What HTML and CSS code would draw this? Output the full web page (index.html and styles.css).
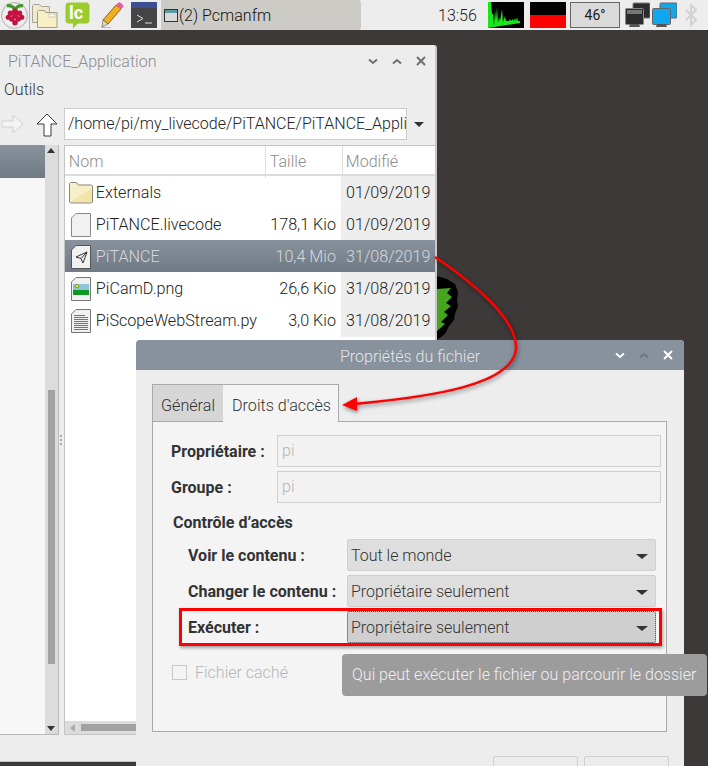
FILE: index.html
```html
<!DOCTYPE html>
<html lang="fr">
<head>
<meta charset="utf-8">
<title>PiTANCE</title>
<link rel="stylesheet" href="styles.css">
</head>
<body>
<header class="panel">
  <div class="launcher">
    <span class="menu-btn">
      <svg width="20" height="22" viewBox="0 0 22 24"><path d="M2 2c4-1 7 1 9 4M20 2c-4-1-7 1-9 4" stroke="#3f9a2e" stroke-width="3.500" fill="none"/><g fill="#c4123e"><circle cx="11" cy="8" r="3.200"/><circle cx="6" cy="10" r="3"/><circle cx="16" cy="10" r="3"/><circle cx="3.500" cy="14.500" r="2.800"/><circle cx="18.500" cy="14.500" r="2.800"/><circle cx="11" cy="13" r="3.200"/><circle cx="7.500" cy="16.500" r="3"/><circle cx="14.500" cy="16.500" r="3"/><circle cx="11" cy="20.500" r="3"/></g></svg>
    </span>
    <span class="sep"></span>
    <svg class="i-folder" width="26" height="26" viewBox="0 0 26 26"><path d="M.5 3.500l1-1h6l2 2h8v16H.5z" fill="#efe9cf" stroke="#a9a490"/><path d="M5.500 9.500l1-1h6l1 2h11.500v15H5.500z" fill="#f7efc6" stroke="#a39d84"/><rect x="17" y="12" width="6" height="3" fill="#fff" stroke="#b5ae92" stroke-width=".6"/></svg>
    <svg class="i-lc" width="25" height="27" viewBox="0 0 25 27"><path d="M4 .5h17a3.500 3.500 0 0 1 3.500 3.500v14a3.500 3.500 0 0 1-3.500 3.500h-8l-5 5v-5H4A3.500 3.500 0 0 1 .5 18V4A3.500 3.500 0 0 1 4 .5z" fill="#9ccb2f"/><text class="lc-text" x="4" y="17">lc</text></svg>
    <svg class="i-pencil" width="24" height="26" viewBox="0 0 24 26"><path d="M3 18L16 3l5 4L8 22z" fill="#f2b01e" stroke="#6b4a12" stroke-width=".8"/><path d="M16 3l2-2a2 2 0 0 1 3 0l2 2a2 2 0 0 1 0 2.500L21 7z" fill="#e75f9c"/><path d="M3 18l5 4-6 3z" fill="#f0d9ae" stroke="#555" stroke-width=".6"/><path d="M1 25.500h10" stroke="#bbb"/></svg>
    <svg class="i-term" width="26" height="26" viewBox="0 0 26 26"><rect width="26" height="26" fill="#454545"/><rect width="26" height="6" fill="#3d4f92"/><path d="M6 13l6 3.500-6 3.500M14 21h7" stroke="#ddd" stroke-width="1" fill="none"/></svg>
  </div>
  <div class="task">
    <svg width="14" height="13" viewBox="0 0 14 13"><rect x=".5" y=".5" width="13" height="12" fill="#d9d9d9" stroke="#333"/><rect x="1" y="1" width="12" height="3" fill="#5b9aa0"/></svg>
    <span>(2) Pcmanfm</span>
  </div>
  <div class="tray">
    <span class="clock">13:56</span>
    <svg class="cpu" width="36" height="26" viewBox="0 0 36 26"><rect width="36" height="26" fill="#000"/><path d="M0 26V0h3l1 12h1l1 12 1-16 1 10 1-13 1 16 1-6 1 4 2-12 1 13 2-6 1 5h3l1-2 1 2 2-2 1 2 1-3 1 3 1-4 1 4h2v2z" fill="#19e619"/></svg>
    <span class="mem"></span>
    <span class="temp">46°</span>
    <svg class="net" width="25" height="26" viewBox="0 0 25 26"><rect x="8" y="1" width="17" height="15" rx="1" fill="#2c2c2c" stroke="#777"/><rect x=".5" y="6.500" width="18" height="16" rx="1" fill="#2c2c2c" stroke="#888"/><rect x="2" y="8" width="15" height="4" fill="#777"/><path d="M5 22h9l1 3H4z" fill="#555"/></svg>
    <svg class="net" width="25" height="26" viewBox="0 0 25 26"><rect x="8" y="1" width="17" height="15" rx="1" fill="#14a6e8" stroke="#666"/><rect x=".5" y="6.500" width="18" height="16" rx="1" fill="#0fa8f0" stroke="#666"/><path d="M5 22h9l1 3H4z" fill="#555"/></svg>
    <svg class="bt" width="12" height="24" viewBox="0 0 12 24"><path d="M1 7l10 10-5 5V2l5 5L1 17" fill="none" stroke="#d2d2d2" stroke-width="2"/></svg>
  </div>
</header>

<main class="desktop">
  <svg class="leaf" width="22" height="65" viewBox="0 0 22 65"><path d="M0 0L10 3L18 8L21 16L20 24L21 30L18 38L17 44L12 50L8 58L0 64z" fill="#000"/><path d="M0 13L14 12L10 17L15 21L9 27L14 30L7 36L11 39L4 46L8 48L0 55z" fill="#45a51e"/></svg>

  <section class="window fm">
    <div class="fm-title">
      <span class="fm-name">PiTANCE_Application</span>
      <span class="controls">
        <svg width="10" height="7" viewBox="0 0 10 7"><path d="M1 1.500l4 3.500 4-3.500" fill="none" stroke="#6f6f6f" stroke-width="2"/></svg>
        <svg width="10" height="7" viewBox="0 0 10 7"><path d="M1 5.500l4-3.500 4 3.500" fill="none" stroke="#6f6f6f" stroke-width="2"/></svg>
        <svg width="10" height="10" viewBox="0 0 10 10"><path d="M1 1l8 8M9 1l-8 8" fill="none" stroke="#6f6f6f" stroke-width="2"/></svg>
      </span>
    </div>
    <div class="fm-menu">Outils</div>
    <div class="fm-tools">
      <svg width="24" height="22" viewBox="0 0 24 22"><path d="M1 8h11V2l10 9-10 9v-6H1z" fill="#f4f4f4" stroke="#d0d0d0"/></svg>
      <svg class="up" width="22" height="24" viewBox="0 0 22 24"><path d="M11 1l10 10h-6v12H8V11H1z" fill="#fff" stroke="#3a3a3a"/></svg>
      <div class="path"><span>/home/pi/my_livecode/PiTANCE/PiTANCE_Appli</span></div>
      <span class="tri path-tri"></span>
    </div>
    <div class="fm-body">
      <aside class="side">
        <div class="side-list"><div class="side-sel"></div></div>
        <div class="vscroll">
          <span class="tri-up"></span>
          <span class="vthumb"></span>
          <span class="tri"></span>
        </div>
      </aside>
      <div class="grip"><i></i><i></i><i></i></div>
      <div class="list">
        <div class="list-head">
          <span class="h-name">Nom</span><span class="h-size">Taille</span><span class="h-date">Modifié</span>
        </div>
        <div class="row">
          <svg width="24" height="22" viewBox="0 0 24 22"><path d="M.5 3V1.500l1-1h6l2 2.500h13l1 1v16l-1 1H1.500l-1-1z" fill="#f6efc8" stroke="#8b8670"/><path d="M1 20L23 6v14z" fill="#f1e5ac"/></svg>
          <span class="name">Externals</span><span class="size"></span><span class="date">01/09/2019</span>
        </div>
        <div class="row">
          <svg class="doc" width="20" height="24" viewBox="0 0 20 24"><path d="M5 .5h14.500v23H.5V5z" fill="#f1f1f1" stroke="#8a8a8a"/></svg>
          <span class="name">PiTANCE.livecode</span><span class="size">178,1 Kio</span><span class="date">01/09/2019</span>
        </div>
        <div class="row sel">
          <svg class="doc" width="20" height="24" viewBox="0 0 20 24"><path d="M5 .5h14.500v23H.5V5z" fill="#f1f1f1" stroke="#555"/><path d="M5 12l11-5-4 11-2-4.500zM16 7L10 13.500" fill="none" stroke="#333"/></svg>
          <span class="name">PiTANCE</span><span class="size">10,4 Mio</span><span class="date">31/08/2019</span>
        </div>
        <div class="row">
          <svg class="doc" width="20" height="24" viewBox="0 0 20 24"><path d="M5 .5h14.500v23H.5V5z" fill="#f1f1f1" stroke="#777"/><rect x="2" y="7" width="16" height="6" fill="#8ec4d8"/><rect x="2" y="13" width="16" height="5" fill="#0a9a1e"/><circle cx="6" cy="9" r="1.800" fill="#ee0" stroke="#555" stroke-width=".5"/></svg>
          <span class="name">PiCamD.png</span><span class="size">26,6 Kio</span><span class="date">31/08/2019</span>
        </div>
        <div class="row">
          <svg class="doc" width="20" height="24" viewBox="0 0 20 24"><path d="M5 .5h14.500v23H.5V5z" fill="#f1f1f1" stroke="#777"/><path d="M3 6.500h11M3 8.500h14M3 10.500h14M3 12.500h14M3 14.500h14M3 16.500h14M3 18.500h14M3 20.500h14" stroke="#555" stroke-width=".8"/></svg>
          <span class="name">PiScopeWebStream.py</span><span class="size">3,0 Kio</span><span class="date">31/08/2019</span>
        </div>
        <div class="list-fill"></div>
        <div class="hscroll"><span class="tri-left"></span><span class="hthumb"></span></div>
      </div>
    </div>
  </section>

  <section class="window dialog">
    <div class="d-title">
      <span class="d-name">Propriétés du fichier</span>
      <span class="controls light">
        <svg width="10" height="7" viewBox="0 0 10 7"><path d="M1 1.500l4 3.500 4-3.500" fill="none" stroke="#fff" stroke-width="2"/></svg>
        <svg width="10" height="7" viewBox="0 0 10 7"><path d="M1 5.500l4-3.500 4 3.500" fill="none" stroke="#6e7882" stroke-width="2"/></svg>
        <svg width="10" height="10" viewBox="0 0 10 10"><path d="M1 1l8 8M9 1l-8 8" fill="none" stroke="#fff" stroke-width="2"/></svg>
      </span>
    </div>
    <div class="d-body">
      <div class="tabs">
        <span class="tab">Général</span>
        <span class="tab active">Droits d'accès</span>
      </div>
      <div class="panel-box">
        <div class="f-row"><label class="f-label">Propriétaire :</label><div class="f-input">pi</div></div>
        <div class="f-row"><label class="f-label">Groupe :</label><div class="f-input">pi</div></div>
        <h3 class="sect">Contrôle d’accès</h3>
        <div class="s-row"><label class="s-label">Voir le contenu :</label><div class="select">Tout le monde<span class="tri"></span></div></div>
        <div class="s-row"><label class="s-label">Changer le contenu :</label><div class="select">Propriétaire seulement<span class="tri"></span></div></div>
        <div class="s-row"><label class="s-label">Exécuter :</label><div class="select focus">Propriétaire seulement<span class="tri"></span></div></div>
        <div class="check-row"><span class="check"></span><span>Fichier caché</span></div>
      </div>
      <div class="d-foot"><span class="btn"></span><span class="btn"></span></div>
    </div>
  </section>

  <div class="redbox"></div>
  <div class="tooltip">Qui peut exécuter le fichier ou parcourir le dossier</div>
  <svg class="arrow" width="708" height="736" viewBox="0 30 708 736">
    <path d="M435 257C472 282 516 318 516 347C516 385 430 397 354 404" fill="none" stroke="#f00" stroke-width="2.500"/>
    <path d="M342 405L357 397L357 411z" fill="#f00"/>
  </svg>
</main>
</body>
</html>
```
FILE: styles.css
```css
* { box-sizing: border-box; }
html, body { margin: 0; height: 100%; overflow: hidden; }
body { width: 708px; height: 766px; display: flex; flex-direction: column; font-family: Roboto, "Liberation Sans", sans-serif; font-size: 16px; font-weight: 300; color: #222; background: #3d3938; }
svg { display: block; flex: none; }

.panel { height: 30px; flex: none; display: flex; align-items: center; background: #ededed; }
.launcher { display: flex; align-items: center; width: 161px; height: 30px; }
.menu-btn { width: 27px; height: 27px; margin-left: 1px; border-radius: 50%; background: radial-gradient(#f2f2f2 55%, #c4c4c4); border: 1px solid #b5b5b5; display: flex; align-items: center; justify-content: center; }
.sep { width: 1px; height: 30px; margin-left: 1px; background: #b0b0b0; }
.i-folder { margin-left: 2px; }
.i-lc { margin-left: 7px; }
.lc-text { font-family: Roboto, sans-serif; font-weight: 700; font-size: 18px; fill: #fff; }
.i-pencil { margin-left: 10px; }
.i-term { margin-left: 7px; }
.task { width: 200px; height: 30px; display: flex; align-items: center; gap: 1px; padding-left: 3px; background: #cdcbc6; border-radius: 0 3px 3px 0; color: #111; }
.tray { display: flex; align-items: center; height: 30px; }
.clock { margin-left: 77px; width: 50px; color: #222; }
.mem { width: 36px; height: 26px; margin-left: 6px; background: linear-gradient(#000 0 50%, #f00 50% 100%); }
.temp { width: 50px; height: 26px; margin-left: 4px; border: 1px solid #666; background: #dadada; font-size: 14px; font-weight: 400; line-height: 24px; text-align: center; color: #222; }
.net { margin-left: 2px; }
.temp + .net { margin-left: 5px; }
.bt { margin-left: 8px; }

.desktop { position: relative; flex: 1; background: #3d3938; }
.leaf { position: absolute; left: 437px; top: 246px; }
.window { position: absolute; }
.controls { display: flex; align-items: center; gap: 14px; }

.fm { left: 0; top: 15px; width: 437px; height: 717px; display: flex; flex-direction: column; background: #ededed; border-right: 2px solid #c8c8c8; border-radius: 0 3px 0 0; border-bottom: 1px solid #c4c4c4; }
.fm-title { height: 30px; flex: none; display: flex; align-items: center; justify-content: space-between; padding: 2px 9px 0 8px; }
.fm-name { color: #8c8c8c; }
.fm-menu { height: 28px; flex: none; line-height: 30px; padding-left: 4px; color: #333; }
.fm-tools { height: 42px; flex: none; display: flex; align-items: flex-start; padding: 5px 0 0 1px; }
.fm-tools > svg { margin-top: 5px; }
.up { margin-left: 11px; }
.path { width: 343px; height: 32px; margin-left: 6px; padding-left: 3px; background: #fff; border: 1px solid #ccc; line-height: 30px; overflow: hidden; white-space: nowrap; color: #222; }
.tri { width: 0; height: 0; border: 5px solid transparent; border-top: 5px solid #333; border-bottom: 0; }
.path-tri { margin: 14px 0 0 7px; border-width: 5px 5px 0; }

.fm-body { height: 590px; flex: none; display: flex; }
.side { width: 59px; display: flex; border: solid #b8b8b8; border-width: 0 1px 1px 0; background: #f7f7f7; }
.side-list { flex: 1; }
.side-sel { height: 33px; background: linear-gradient(#87929d, #6f7a85); }
.vscroll { width: 13px; display: flex; flex-direction: column; align-items: center; justify-content: space-between; padding: 3px 0; background: #dcdcdc; position: relative; }
.tri-up { width: 0; height: 0; border: solid transparent; border-width: 0 4px 5px; border-bottom-color: #333; }
.vscroll .tri { border-width: 5px 4px 0; }
.vthumb { position: absolute; left: 3px; top: 245px; width: 7px; height: 274px; background: #a2a2a2; }
.grip { width: 5px; display: flex; flex-direction: column; align-items: center; justify-content: center; gap: 2px; }
.grip i { width: 2px; height: 2px; background: #aaa; }
.list { width: 372px; display: flex; flex-direction: column; background: #fff; border: solid #c4c4c4; border-width: 1px 0 1px 1px; }
.list-head { height: 30px; flex: none; display: grid; grid-template-columns: 200px 77px 1fr; border-bottom: 2px solid #dcdcdc; color: #8c8c8c; line-height: 32px; }
.h-name { padding-left: 4px; }
.h-size { padding-left: 4px; border-left: 1px solid #dcdcdc; }
.h-date { padding-left: 3px; border-left: 1px solid #dcdcdc; }
.row { height: 32px; flex: none; display: grid; grid-template-columns: 5px 20px 6px 1fr 77px 94px; align-items: center; font-size: 16.150px; }
.row svg { grid-column: 2; }
.row .doc { margin-left: 1px; }
.row > svg:not(.doc) { margin-left: -1px; }
.name { grid-column: 4; white-space: nowrap; }
.size { grid-column: 5; text-align: right; padding-right: 5px; white-space: nowrap; }
.date { grid-column: 6; align-self: stretch; line-height: 33px; background: #ededed; padding-left: 5px; }
.row.sel { background: linear-gradient(#87929d, #6f7a85); color: #d4d8dc; }
.row.sel .date { background: none; }
.list-fill { flex: 1; }
.hscroll { height: 13px; flex: none; display: flex; align-items: center; background: #dcdcdc; padding-left: 5px; gap: 6px; }
.tri-left { width: 0; height: 0; border: solid transparent; border-width: 4px 5px 4px 0; border-right-color: #aaa; }
.hthumb { flex: 1; height: 7px; background: #a2a2a2; }

.dialog { left: 136px; top: 310px; width: 548px; height: 426px; display: flex; flex-direction: column; background: #ededed; border-radius: 4px 4px 0 0; overflow: hidden; }
.d-title { height: 30px; flex: none; position: relative; display: flex; align-items: center; justify-content: flex-end; padding-right: 11px; background: #87929d; }
.d-name { position: absolute; left: 0; right: 0; top: 7px; text-align: center; color: #e2e5e8; }
.d-body { flex: 1; padding: 14px 17px 0 16px; }
.tabs { height: 38px; display: flex; }
.tab { height: 38px; padding: 0 8px; line-height: 41px; background: #d6d6d6; border: 1px solid #a9a9a9; color: #333; white-space: nowrap; font-size: 16.150px; }
.tab.active { width: 116px; margin-left: -1px; padding-left: 9px; background: #f4f4f4; border-left: 0; border-bottom: 0; position: relative; z-index: 1; }
.panel-box { height: 311px; margin-top: -1px; padding-top: 13px; background: #f4f4f4; border: 1px solid #a9a9a9; }
.f-row { display: flex; align-items: center; height: 32px; margin-bottom: 4px; padding-left: 18px; }
.f-label { width: 106px; font-weight: 700; color: #333; }
.f-input { width: 384px; height: 32px; padding-left: 4px; line-height: 30px; border: 1px solid #d0d0d0; background: #f2f2f2; color: #b4b4b4; }
.sect { margin: 9px 0 0 20px; height: 27px; font-size: 16px; font-weight: 700; line-height: 22px; color: #333; }
.s-row { display: flex; align-items: center; height: 32px; margin-bottom: 4px; padding-left: 35px; }
.s-label { width: 159px; font-weight: 700; color: #333; white-space: nowrap; }
.select { width: 309px; height: 32px; display: flex; align-items: center; justify-content: space-between; padding: 0 7px 0 3px; border: 1px solid #cfcfcf; border-radius: 2px; background: #dedede; color: #333; }
.select .tri { border-width: 5px 6px 0; border-top-color: #333; margin-top: 3px; }
.select.focus { background: #cfcfcf; border: 1px dotted #444; }
.check-row { display: flex; align-items: center; gap: 8px; height: 16px; margin: 21px 0 0 19px; color: #b4b4b4; }
.check { width: 15px; height: 15px; border: 1px solid #c8c8c8; background: #f4f4f4; }
.d-foot { display: flex; justify-content: flex-end; gap: 6px; padding-top: 24px; margin-right: -2px; }
.btn { width: 85px; height: 32px; border: 1px solid #cfcfcf; border-radius: 2px; background: #ececec; }

.redbox { position: absolute; left: 179px; top: 578px; width: 483px; height: 38px; border: 3px solid #f00; box-shadow: 1px 2px 3px rgba(0, 0, 0, .35); }
.tooltip { position: absolute; left: 342px; top: 624px; width: 365px; height: 42px; padding-left: 10px; line-height: 42px; background: #9c9c9c; border-radius: 4px; color: #f0f0f0; white-space: nowrap; }
.arrow { position: absolute; left: 0; top: 0; pointer-events: none; filter: drop-shadow(1px 2px 2px rgba(0, 0, 0, .45)); }
```
